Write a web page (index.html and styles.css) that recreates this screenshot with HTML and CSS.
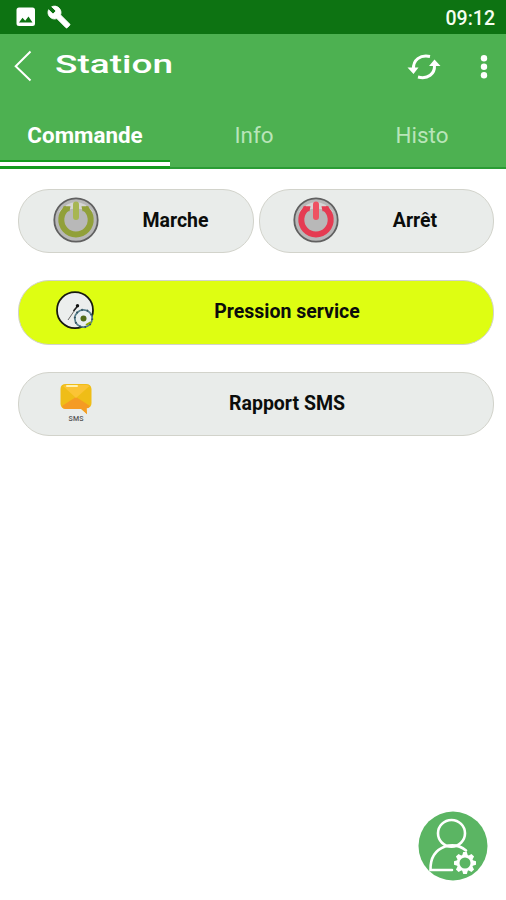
FILE: index.html
```
<!DOCTYPE html>
<html lang="fr">
<head>
<meta charset="utf-8">
<title>Station</title>
<link rel="stylesheet" href="styles.css">
</head>
<body>
<div class="status">
  <svg class="status-photo" width="20" height="20" viewBox="0 0 20 20"><path fill="#fff" fill-rule="evenodd" d="M3 .5h13.500q2.500 0 2.500 2.500v13.500q0 2.500-2.500 2.500H3Q.5 19 .5 16.500V3Q.5.500 3 .500ZM3 15.500h13.500l-4-6-3.300 4.300-2.700-3Z"/></svg>
  <svg class="status-wrench" width="24" height="24" viewBox="0 0 24 24"><path fill="#fff" stroke="#fff" stroke-width=".8" d="M22.700 19l-9.100-9.100c.9-2.300.4-5-1.500-6.900-2-2-5-2.400-7.400-1.300L9 6 6 9 1.600 4.700C.4 7.100.9 10.100 2.900 12.100c1.900 1.900 4.600 2.400 6.900 1.500l9.100 9.100c.4.4 1 .4 1.400 0l2.300-2.300c.5-.4.5-1.100.1-1.400z"/></svg>
  <span class="clock">09:12</span>
</div>
<header class="bar">
  <svg class="back" width="18" height="32" viewBox="0 0 18 32"><path d="M16.500 1.500 1.700 16.200 16.500 30.500" fill="none" stroke="#fff" stroke-width="2"/></svg>
  <svg class="title" width="122" height="34" viewBox="0 0 122 34"><text x="0" y="24.500" textLength="118" lengthAdjust="spacingAndGlyphs">Station</text></svg>
  <svg class="sync" width="34" height="28" viewBox="0 0 34 28"><g fill="none" stroke="#fff" stroke-width="3"><path d="M6.500 16C6 7 13 1.500 23 3.500"/><path d="M27.500 12C28 21 21 26.500 11 24"/></g><path fill="#fff" d="M.5 14.500h11l-5 6.500ZM22 13h11.500l-6-6.500Z"/></svg>
  <svg class="more" width="8" height="24" viewBox="0 0 8 24"><g fill="#fff"><circle cx="4" cy="3.300" r="3.200"/><circle cx="4" cy="11.700" r="3.200"/><circle cx="4" cy="20.200" r="3.200"/></g></svg>
</header>
<nav class="tabs">
  <span class="tab active">Commande</span>
  <span class="tab info">Info</span>
  <span class="tab histo">Histo</span>
</nav>
<main>
  <div class="pair">
    <div class="button">
      <svg class="power on" width="46" height="46" viewBox="0 0 46 46"><circle class="rim" cx="23" cy="23" r="21.700"/><path class="gloss" d="M5.500 15Q23-5 40.500 15Q23 8 5.500 15Z"/><path class="ring" d="M14 11.200A14.700 14.700 0 1 0 32 11.200"/><path class="cap" d="M10.500 9.300h7l-1 5h-7ZM28.500 9.300h7l1 5h-7Z"/><path class="stem" d="M23 7.500V20"/></svg>
      <span class="label">Marche</span>
    </div>
    <div class="button">
      <svg class="power off" width="46" height="46" viewBox="0 0 46 46"><circle class="rim" cx="23" cy="23" r="21.700"/><path class="gloss" d="M5.500 15Q23-5 40.500 15Q23 8 5.500 15Z"/><path class="ring" d="M14 11.200A14.700 14.700 0 1 0 32 11.200"/><path class="cap" d="M10.500 9.300h7l-1 5h-7ZM28.500 9.300h7l1 5h-7Z"/><path class="stem" d="M23 7.500V20"/></svg>
      <span class="label">Arrêt</span>
    </div>
  </div>
  <div class="button wide lime">
    <svg class="gauge" width="40" height="40" viewBox="0 0 40 40"><circle cx="19" cy="19.200" r="18" fill="#eceeed" stroke="#17190f" stroke-width="1.800"/><path d="M12 29 21.500 15" stroke="#666" stroke-width="1"/><path d="M17.500 20 22 14.500" stroke="#222" stroke-width="1.500"/><circle cx="21.500" cy="14.700" r="1.700" fill="#111"/><circle cx="27.500" cy="27.500" r="8.700" fill="#e9eff0" stroke="#567e8c" stroke-width="1.700"/><circle cx="27.500" cy="27.500" r="8.700" fill="none" stroke="#345260" stroke-width="2" stroke-dasharray="1.500 4"/><circle cx="27.500" cy="27.500" r="3" fill="#526c18"/><path d="m30 34 5-3" stroke="#8da900" stroke-width="2"/></svg>
    <span class="label">Pression service</span>
  </div>
  <div class="button wide">
    <svg class="sms" width="34" height="40" viewBox="0 0 34 40"><path fill="#efbd17" d="M6 1H26q5 0 5.500 5v14q0 5-5 5l.5 6-6-5H6q-5 0-5.500-5V6Q.5 1 6 1Z"/><path fill="#f59b24" d="M2 23 16 14l14 9q-1 2-3.500 2.500l.5 5.800L21.500 26H6q-3 0-4-3Z"/><path fill="#fbc435" d="M3 3 16 15 29.500 3 27 2H6Z"/><path d="M7 3h10" stroke="#fff2b2" stroke-width="2" stroke-linecap="round"/><text x="8.500" y="38" textLength="15">SMS</text></svg>
    <span class="label">Rapport SMS</span>
  </div>
</main>
<div class="fab">
  <svg width="70" height="70" viewBox="0 0 70 70"><circle cx="35" cy="35" r="34.500" fill="#5bb563"/><g fill="none" stroke="#fff" stroke-width="2.600" stroke-linecap="round"><ellipse cx="33.500" cy="22.300" rx="13.500" ry="13.300"/><path d="M34 59H12.500Q12 41 27 35.500Q39 32 48 39.500"/></g><g transform="translate(47 52)"><g fill="#fff"><g id="teeth"><path d="M-3-7-1.800-11H1.800L3-7V7L1.800 11H-1.800L-3 7Z"/></g><use href="#teeth" transform="rotate(45)"/><use href="#teeth" transform="rotate(90)"/><use href="#teeth" transform="rotate(135)"/><circle r="8.200"/></g><circle r="5.500" fill="#5bb563"/></g></svg>
</div>
</body>
</html>
```
FILE: styles.css
```
* { box-sizing: border-box; }
body {
  margin: 0;
  height: 900px;
  background: #fff;
  font-family: Roboto, sans-serif;
  overflow: hidden;
}
svg { display: block; flex: none; overflow: visible; }
.status {
  display: flex;
  height: 34px;
  padding: 0 11px 0 16px;
  background: #0d7312;
}
.status-photo { margin-top: 7px; }
.status-wrench { margin: 5px 0 0 11px; }
.clock {
  margin-left: auto;
  color: #f5fff0;
  font-size: 19.500px;
  font-weight: 500;
  line-height: 37px;
}
.bar {
  display: flex;
  height: 68px;
  padding: 0 18px 0 14px;
  background: #4db151;
}
.back { margin-top: 16px; }
.title { margin: 14px auto 0 23px; fill: #fff; font-size: 26.500px; font-weight: 500; }
.sync { margin: 19px 39px 0 0; }
.more { margin-top: 21px; }
.tabs {
  display: grid;
  grid-template-columns: 170px 1fr 168px;
  height: 67px;
  background: #4db151;
  border-bottom: 2px solid #2a9c34;
}
.tab {
  height: 65px;
  color: #b9e5b9;
  font-size: 22.400px;
  line-height: 67px;
  text-align: center;
}
.active {
  height: 67px;
  color: #fff;
  font-weight: 700;
  background: linear-gradient(#159b20 0 2px, #fff 2px 6px, #159b20 6px 9px) bottom / 100% 9px no-repeat;
}
main {
  display: flex;
  flex-direction: column;
  gap: 27px;
  padding: 20px 12px 0 18px;
}
.pair { display: grid; grid-template-columns: 236px 235px; gap: 5px; }
.button {
  display: flex;
  height: 64px;
  padding-left: 34px;
  border: 1.500px solid #d2d3cb;
  border-radius: 31px;
  background: #e9ecea;
}
.wide { height: 65px; padding-left: 37px; }
.wide + .wide { height: 64px; }
.lime { background: #defe12; }
.label {
  flex: 1;
  color: #0b0d0b;
  font-size: 19.500px;
  font-weight: 700;
  line-height: 61px;
  text-align: center;
}
.pair .label { margin-left: -1px; }
.pair .button + .button .label { margin-left: -2px; }
.power { margin-top: 7px; }
.gauge { margin-top: 10px; }
.gauge + .label { margin-left: -15px; line-height: 62px; }
.sms { margin: 10px 0 0 4px; }
.sms + .label { margin-left: -13px; }
.sms text { font-size: 7px; font-weight: 500; fill: #555; }
.rim { fill: #b8b8b8; stroke: #606060; stroke-width: 1.800; }
.gloss { fill: #d6d6d6; }
.ring, .stem { fill: none; stroke-width: 6; }
.stem { stroke-linecap: round; }
.on .ring { stroke: #91a039; }
.on .cap { fill: #91a039; }
.on .stem { stroke: #a7b653; }
.off { margin-left: -1px; }
.off .ring { stroke: #e53b52; }
.off .cap { fill: #e53b52; }
.off .stem { stroke: #ee5262; }
.fab { position: absolute; left: 418px; top: 811px; }
```
